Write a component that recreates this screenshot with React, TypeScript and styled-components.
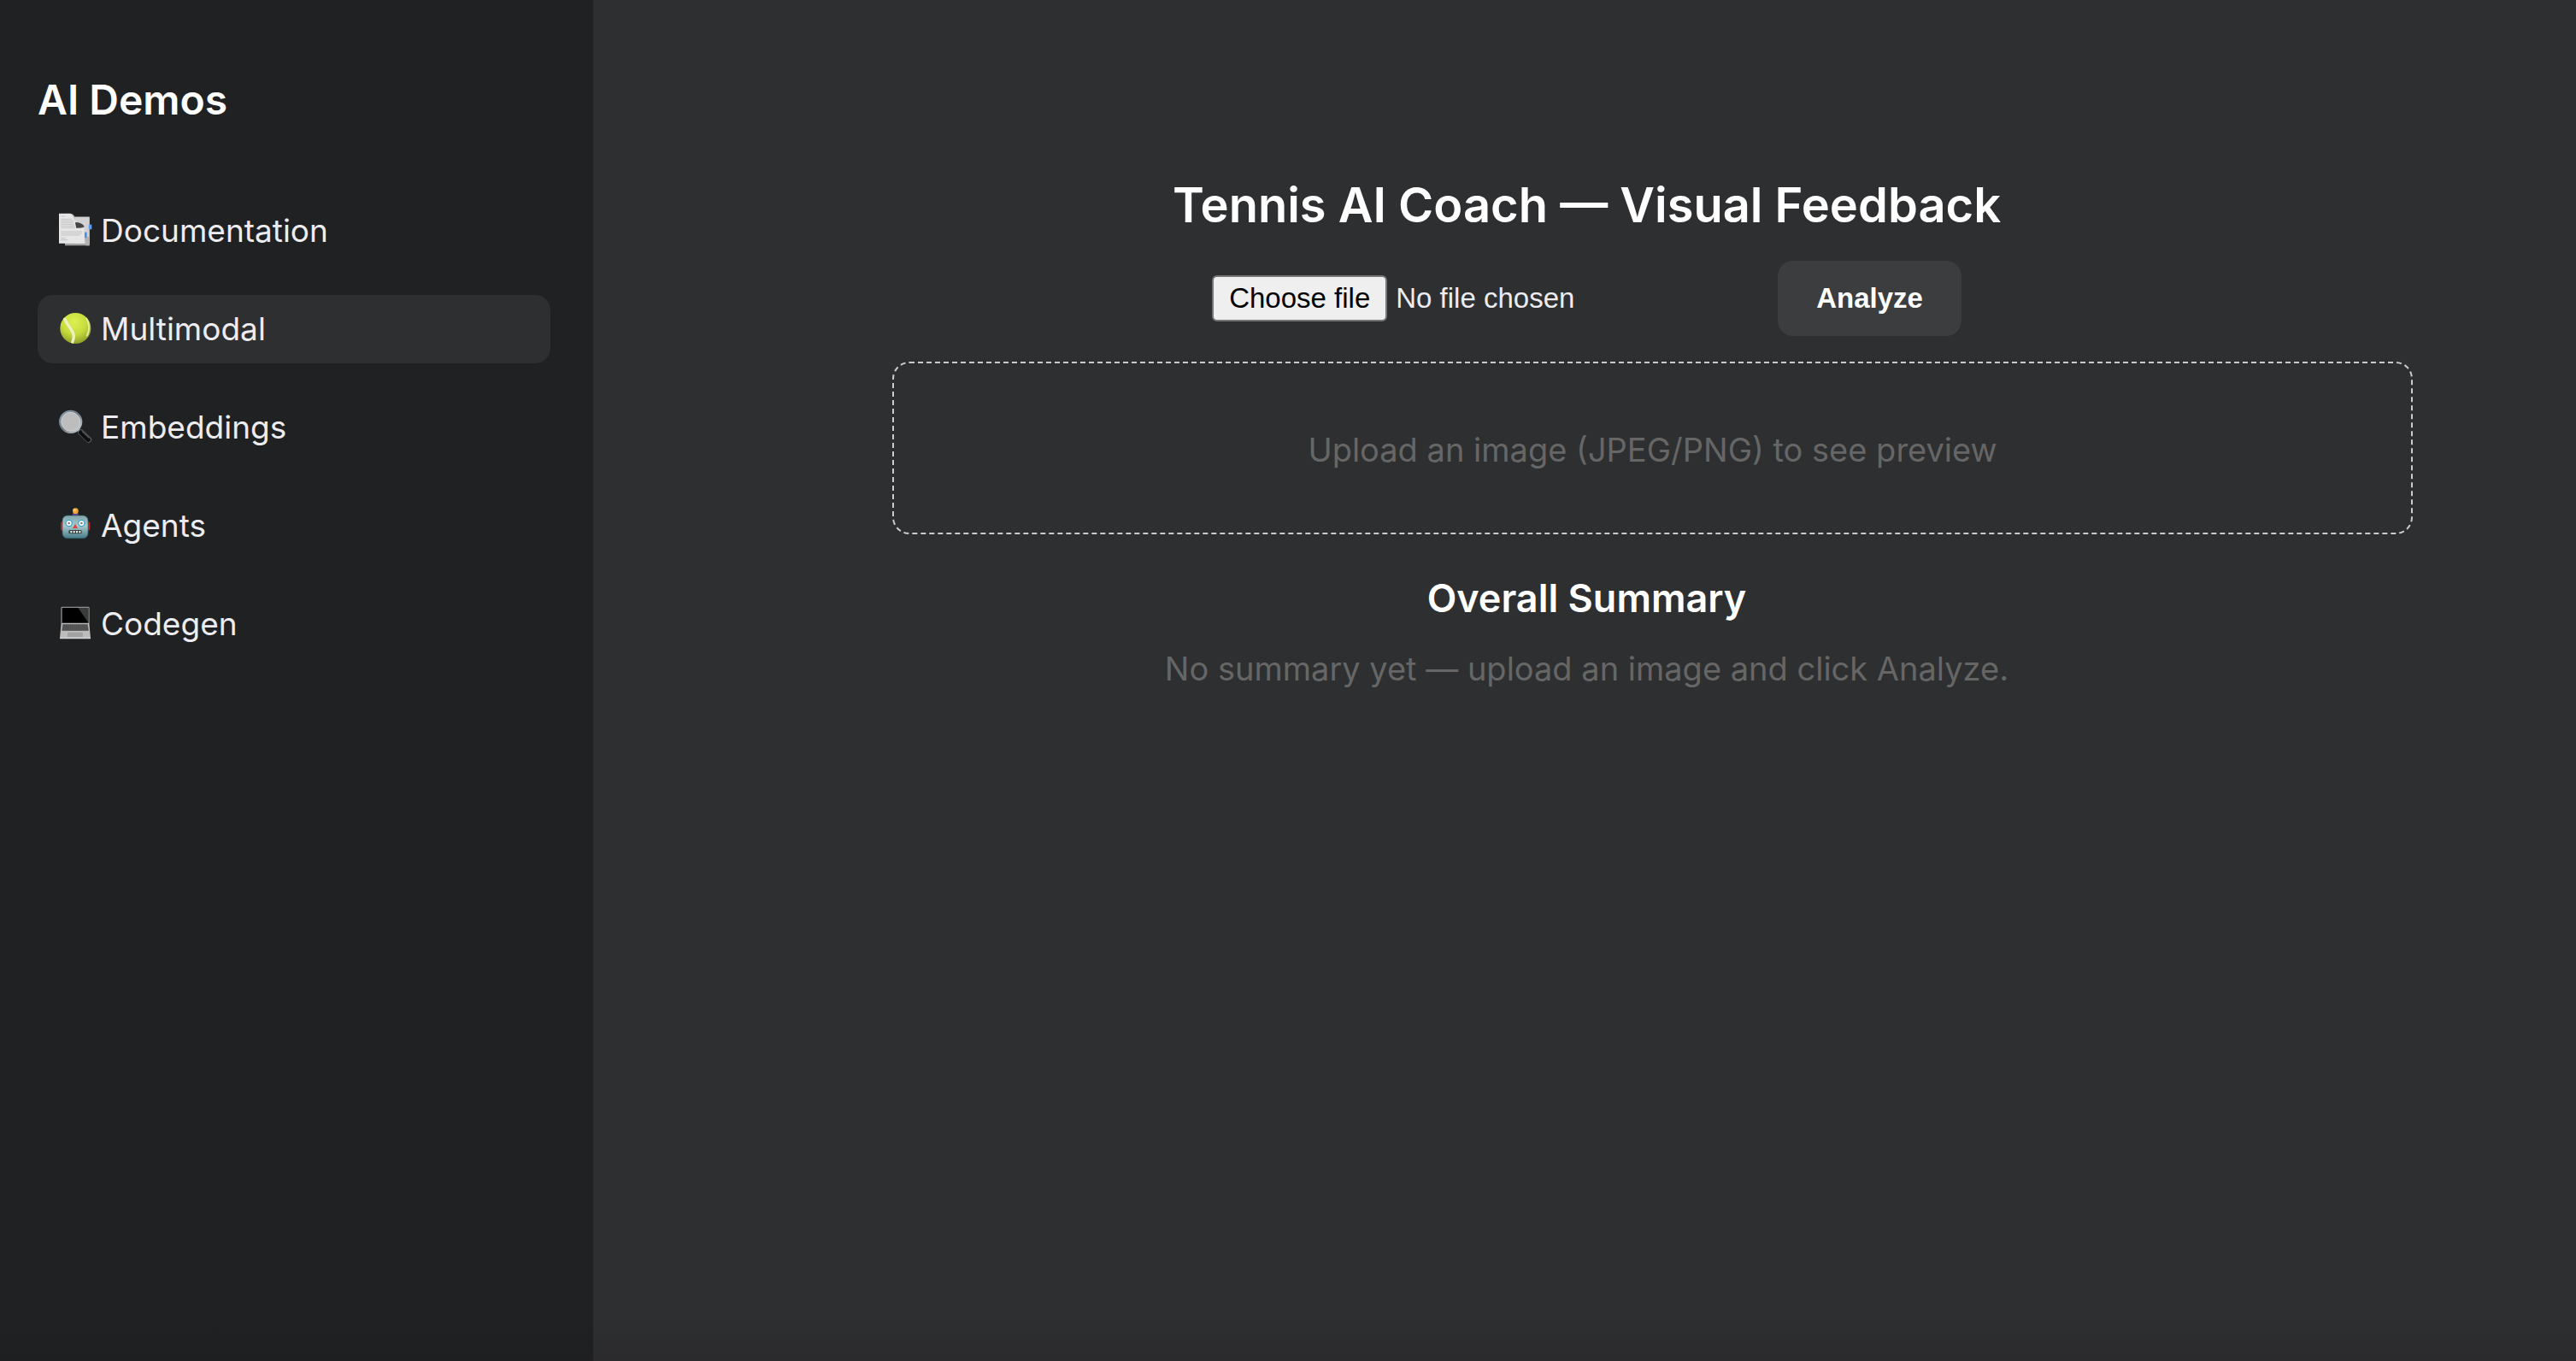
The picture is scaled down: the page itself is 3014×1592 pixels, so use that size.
import React, { useState } from "react";
import styled, { createGlobalStyle } from "styled-components";

const Global = createGlobalStyle`
  *, *::before, *::after { box-sizing: border-box; }
  body { margin: 0; background: #2e2f31; color: #ffffff; font-family: Inter, "Liberation Sans", sans-serif; }
`;

const Layout = styled.div`
  display: flex;
  min-height: 100vh;
`;

const Sidebar = styled.aside`
  flex: 0 0 694px;
  padding: 87px 50px 40px 44px;
  background: linear-gradient(to top, #1e1f20, #202123 60px);
`;

const Brand = styled.h2`
  margin: 0 0 83px;
  font-size: 48px;
  line-height: 60px;
  font-weight: 600;
`;

const Nav = styled.nav`
  display: flex;
  flex-direction: column;
  gap: 35px;
`;

const NavLink = styled.a<{ $active?: boolean }>`
  display: flex;
  align-items: center;
  gap: 10px;
  height: 80px;
  padding: 0 24px 2px;
  border-radius: 18px;
  background: ${(p) => (p.$active ? "#2e2f31" : "transparent")};
  color: #ececf1;
  font-size: 37px;
  text-decoration: none;
`;

const Icon = styled.svg`
  flex: none;
  width: 40px;
  height: 40px;
`;

const Main = styled.main`
  flex: 1;
  min-width: 0;
  padding: 204px 268px 40px 273px;
  background: linear-gradient(to top, #2b2b2d, #2e2f31 60px);
  text-align: center;
`;

const Title = styled.h1`
  margin: 0 0 29px;
  font-size: 56px;
  line-height: 72px;
  font-weight: 600;
`;

const Toolbar = styled.div`
  display: flex;
  justify-content: center;
  align-items: center;
  gap: 30px;
  margin-bottom: 30px;
`;

const FilePicker = styled.label`
  position: relative;
  display: flex;
  align-items: center;
  gap: 10px;
  width: 632px;
  font-family: "Liberation Sans", Arial, sans-serif;
  font-size: 33px;
  line-height: 38px;
  color: #ececf1;
`;

const HiddenInput = styled.input`
  position: absolute;
  inset: 0;
  width: 100%;
  opacity: 0;
  cursor: pointer;
`;

const FileButton = styled.span`
  padding: 6px 18px;
  border: 2px solid #767676;
  border-radius: 6px;
  background: #efefef;
  color: #000000;
`;

const AnalyzeButton = styled.button`
  height: 88px;
  padding: 0 45px;
  border: 0;
  border-radius: 18px;
  background: #3c3d3f;
  color: #ffffff;
  font-family: "Liberation Sans", Arial, sans-serif;
  font-size: 33px;
  font-weight: 700;
`;

const Preview = styled.div`
  display: flex;
  justify-content: center;
  align-items: center;
  height: 202px;
  margin: 0 -77px 46px 77px;
  border: 2px dashed #cccccc;
  border-radius: 20px;
`;

const Muted = styled.p`
  margin: 0;
  padding-top: 4px;
  font-size: 38px;
  line-height: 50px;
  color: #666666;
`;

const Subtitle = styled.h2`
  margin: 0 0 24px;
  font-size: 45px;
  line-height: 58px;
  font-weight: 600;
`;

const box = "54 28 120 120";

const DocIcon = () => (
  <Icon viewBox={box} aria-hidden="true">
    <path d="M78 42h86v101H78z" fill="#a0a0a0" />
    <path d="M112 42h52v94h-52z" fill="#d2d2d2" />
    <path d="M146 112h18v31h-12z" fill="#b0b0b0" />
    <path d="M57 30h40c10 2 15 8 17 20l2 12c12 0 24 5 30 16v57H57z" fill="#e6e6e6" />
    <path d="M97 30c12 2 17 12 17 32 12-1 27 3 32 17-9 4-20 2-28 3-4-18-3-40-21-52z" fill="#a8a8a8" />
    <path d="M114 62c14-1 27 4 32 15-10 4-20 4-28 4z" fill="#444444" />
    <path d="M64 40h14M64 50h38M64 56h44M64 62h44M64 68h46M64 74h48M64 80h50M64 94h74M64 100h74M64 106h66M64 117h16M64 123h24" stroke="#c4c4c4" strokeWidth="3" />
    <path d="M162 69h10v17h-10z" fill="#5b9cec" />
    <path d="M158 69h4v17h-4z" fill="#a9c9f0" />
    <path d="M147 96h8v19h-8z" fill="#4a91ee" />
  </Icon>
);

const BallIcon = () => (
  <Icon viewBox={box} aria-hidden="true">
    <defs>
      <radialGradient id="ball" cx="0.45" cy="0.28" r="0.75">
        <stop offset="0" stopColor="#def052" />
        <stop offset="0.55" stopColor="#c6dc3c" />
        <stop offset="1" stopColor="#8a9c28" />
      </radialGradient>
    </defs>
    <circle cx="115" cy="88" r="54" fill="url(#ball)" />
    <path d="M77 52c3 22 32 40 32 64 0 10-3 17-6 24" fill="none" stroke="#eef0c4" strokeWidth="10" />
    <path d="M153 52c5 8 9 19 9 32s-3 24-8 32" fill="none" stroke="#e6ecae" strokeWidth="5" />
  </Icon>
);

const LensIcon = () => (
  <Icon viewBox={box} aria-hidden="true">
    <defs>
      <linearGradient id="rim" x1="0" y1="0" x2="1" y2="1">
        <stop offset="0" stopColor="#8ba0b0" />
        <stop offset="0.5" stopColor="#6d7881" />
        <stop offset="1" stopColor="#d5d9dc" />
      </linearGradient>
    </defs>
    <path d="M122 97l12 11" stroke="#9aa1a7" strokeWidth="10" />
    <path d="M134 108l27 26" stroke="#55595d" strokeWidth="21" strokeLinecap="round" />
    <path d="M134 109l26 25" stroke="#0c0d0e" strokeWidth="15" strokeLinecap="round" />
    <path d="M138 105l24 23" stroke="#6d7276" strokeWidth="3" strokeLinecap="round" />
    <circle cx="98" cy="71" r="37" fill="#bdbdbd" stroke="url(#rim)" strokeWidth="8" />
    <circle cx="98" cy="71" r="33" fill="none" stroke="#dedede" strokeWidth="2" />
  </Icon>
);

const RobotIcon = () => (
  <Icon viewBox={box} aria-hidden="true">
    <defs>
      <linearGradient id="head" x1="0" y1="0" x2="0" y2="1">
        <stop offset="0" stopColor="#7fa5ac" />
        <stop offset="0.45" stopColor="#a9c9cc" />
        <stop offset="1" stopColor="#457b87" />
      </linearGradient>
    </defs>
    <rect x="63" y="77" width="12" height="31" rx="5" fill="#b3292d" />
    <rect x="154" y="77" width="12" height="31" rx="5" fill="#b3292d" />
    <path d="M105 46h20v11h-20z" fill="#5b438f" />
    <circle cx="115" cy="39" r="10" fill="#f3a634" />
    <circle cx="112" cy="36" r="4" fill="#ffd77c" />
    <rect x="69" y="55" width="90" height="80" rx="17" fill="url(#head)" stroke="#2d5f6a" strokeWidth="2" />
    <circle cx="92" cy="82" r="11" fill="#fff" stroke="#3aa6c8" strokeWidth="4" />
    <circle cx="136" cy="82" r="11" fill="#fff" stroke="#3aa6c8" strokeWidth="4" />
    <circle cx="92" cy="82" r="4" fill="#8a7a74" />
    <circle cx="136" cy="82" r="4" fill="#8a7a74" />
    <path d="M114 84l9 16h-18z" fill="#d9483f" />
    <rect x="91" y="106" width="46" height="13" rx="5" fill="#33413f" />
    <path d="M97 109h6v7h-6zM107 109h6v7h-6zM117 109h6v7h-6zM127 109h6v7h-6z" fill="#f2f2f2" />
  </Icon>
);

const LaptopIcon = () => (
  <Icon viewBox={box} aria-hidden="true">
    <rect x="64" y="30" width="100" height="60" rx="4" fill="#8f8f8f" />
    <path d="M68 34h92v53H68z" fill="#000" />
    <path d="M124 34h36v52z" fill="#3b3b3b" />
    <path d="M65 88h98l5 52H60z" fill="#bcbcbc" />
    <path d="M70 92h88l3 22H67z" fill="#4a4a4a" />
    <path d="M70 97h90M69 103h92M68 109h93" stroke="#8a8a8a" strokeWidth="1.5" strokeDasharray="5 2" />
    <path d="M88 120h52l1 16H86z" fill="#a2a2a2" />
    <path d="M60 138h108v5H60z" fill="#d2d2d2" />
  </Icon>
);

const items = [
  { label: "Documentation", icon: <DocIcon /> },
  { label: "Multimodal", icon: <BallIcon />, active: true },
  { label: "Embeddings", icon: <LensIcon /> },
  { label: "Agents", icon: <RobotIcon /> },
  { label: "Codegen", icon: <LaptopIcon /> },
];

export default function App() {
  const [fileName, setFileName] = useState("No file chosen");
  return (
    <>
      <Global />
      <Layout>
        <Sidebar>
          <Brand>AI Demos</Brand>
          <Nav>
            {items.map((item) => (
              <NavLink
                key={item.label}
                href={`#${item.label.toLowerCase()}`}
                $active={item.active}
                aria-current={item.active ? "page" : undefined}
              >
                {item.icon}
                {item.label}
              </NavLink>
            ))}
          </Nav>
        </Sidebar>
        <Main>
          <Title>Tennis AI Coach — Visual Feedback</Title>
          <Toolbar>
            <FilePicker htmlFor="photo">
              <HiddenInput
                id="photo"
                type="file"
                accept="image/jpeg,image/png"
                onChange={(e) => setFileName(e.target.files?.[0]?.name ?? "No file chosen")}
              />
              <FileButton>Choose file</FileButton>
              <span>{fileName}</span>
            </FilePicker>
            <AnalyzeButton type="button">Analyze</AnalyzeButton>
          </Toolbar>
          <Preview>
            <Muted>Upload an image (JPEG/PNG) to see preview</Muted>
          </Preview>
          <Subtitle>Overall Summary</Subtitle>
          <Muted>No summary yet — upload an image and click Analyze.</Muted>
        </Main>
      </Layout>
    </>
  );
}
